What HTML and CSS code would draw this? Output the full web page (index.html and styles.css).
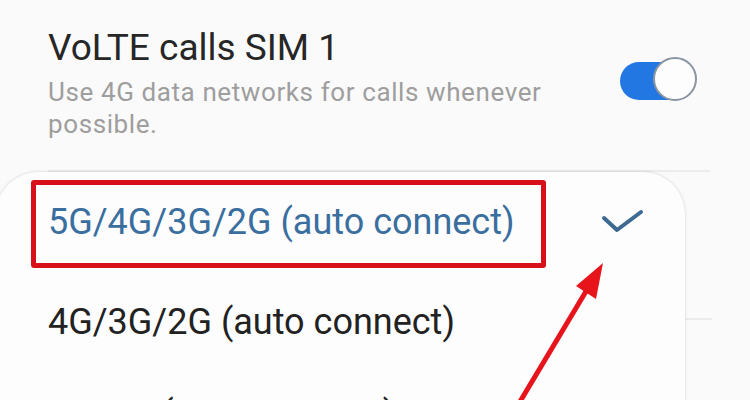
FILE: index.html
```html
<!DOCTYPE html>
<html lang="en">
<head>
  <meta charset="UTF-8" />
  <title>Network mode</title>
  <link rel="stylesheet" href="styles.css">
</head>
<body>
  <div class="screen">
    <div class="setting">
      <div class="setting-text">
        <div class="setting-title">VoLTE calls SIM 1</div>
        <div class="setting-desc">Use 4G data networks for calls whenever possible.</div>
      </div>
      <div class="switch on"><span class="knob"></span></div>
    </div>

    <div class="behind">
      <div class="divider top"></div>
      <div class="divider mid"></div>
    </div>

    <div class="popup">
      <div class="option selected">
        <span>5G/4G/3G/2G (auto connect)</span>
        <svg class="check" width="44" height="28" viewBox="0 0 44 28">
          <polyline points="3,10 16,22 40,4" fill="none" stroke="#3d6a91" stroke-width="4" stroke-linecap="round" stroke-linejoin="round"/>
        </svg>
      </div>
      <div class="option">4G/3G/2G (auto connect)</div>
      <div class="option">3G/2G (auto connect)</div>
    </div>

    <div class="highlight"></div>
    <svg class="arrow" width="750" height="400" viewBox="0 0 750 400">
      <line x1="518" y1="405" x2="588" y2="288" stroke="#e8141c" stroke-width="5" stroke-linecap="round"/>
      <polygon points="603,263 576,286 596,299" fill="#e8141c"/>
    </svg>
  </div>
</body>
</html>
```

FILE: styles.css
```css
body {
  margin: 0;
  background: #fafafa;
  font-family: Roboto, "Noto Sans", sans-serif;
}
.screen {
  width: 750px;
  height: 400px;
  overflow: hidden;
  position: relative;
}
.setting {
  display: flex;
  align-items: flex-start;
  height: 140px;
  box-sizing: border-box;
  padding: 24px 56px 0 48px;
}
.setting-text { width: 510px; }
.setting-title {
  font-size: 37px;
  line-height: 48px;
  color: #262626;
}
.setting-desc {
  margin-top: 4px;
  font-size: 26px;
  line-height: 32px;
  letter-spacing: 0.6px;
  color: #9e9e9e;
}
.switch {
  margin-left: auto;
  margin-top: 38px;
  width: 74px;
  height: 38px;
  border-radius: 19px;
  background: #2377e2;
  position: relative;
}
.knob {
  position: absolute;
  right: -3px;
  top: -5px;
  width: 40px;
  height: 40px;
  border-radius: 50%;
  background: #fdfdfd;
  border: 2.5px solid #8a95a3;
}
.behind { position: relative; }
.divider {
  position: absolute;
  height: 2px;
  background: #ececec;
}
.divider.top { left: 48px; right: 40px; top: 30px; }
.divider.mid { left: 48px; right: 38px; top: 178px; }
.popup {
  position: relative;
  margin: 32px 0 0 -4px;
  width: 689px;
  height: 300px;
  background: #fdfdfd;
  border-radius: 42px;
  box-shadow: 0 0 3px rgba(0, 0, 0, 0.18);
}
.option {
  display: flex;
  align-items: center;
  height: 100px;
  padding-left: 52px;
  padding-right: 40px;
  font-size: 36px;
  color: #222;
}
.option:last-child { margin-top: -8px; }
.option.selected { color: #3a6e9f; }
.check { margin-left: auto; }
.highlight {
  position: absolute;
  left: 31px;
  top: 180px;
  width: 505px;
  height: 78px;
  border: 5px solid #d8101a;
  border-radius: 3px;
}
.arrow {
  position: absolute;
  left: 0;
  top: 0;
}
```
